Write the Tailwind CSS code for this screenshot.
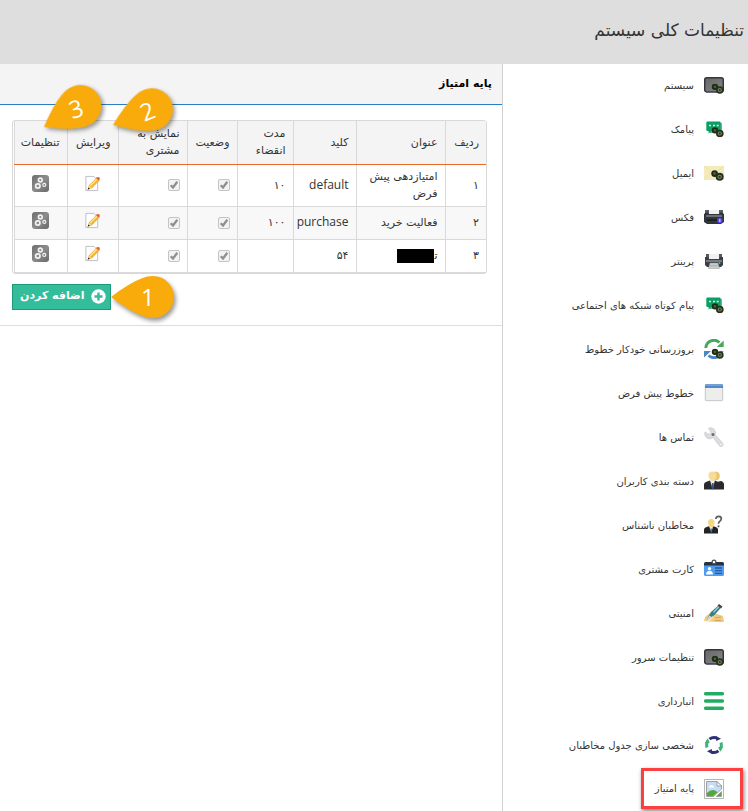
<!DOCTYPE html>
<html lang="fa" dir="rtl">
<head>
<meta charset="utf-8">
<meta name="viewport" content="width=device-width, initial-scale=1">
<title>تنظیمات کلی سیستم</title>
<script src="https://cdn.jsdelivr.net/npm/@tailwindcss/browser@4"></script>
</head>
<body class="flex min-h-screen flex-col bg-white font-['DejaVu_Sans',sans-serif] text-[11px] text-[#333]">

<svg class="absolute size-0" aria-hidden="true">
  <defs>
    <linearGradient id="gGrey" x1="0" y1="0" x2="1" y2="1"><stop offset="0" stop-color="#6d6d6d"/><stop offset=".5" stop-color="#8c8c8c"/><stop offset="1" stop-color="#686868"/></linearGradient>
    <linearGradient id="gScreen" x1="0" y1="0" x2="1" y2="1"><stop offset="0" stop-color="#666"/><stop offset="1" stop-color="#878787"/></linearGradient>
  </defs>
  <symbol id="gears" viewBox="0 0 12 10">
    <circle cx="3.6" cy="3.2" r="2.2" fill="#4d5b40" stroke="#1d2a14" stroke-width="1.7"/>
    <circle cx="8.2" cy="6.2" r="2.8" fill="#7c8768" stroke="#26331c" stroke-width="1.7"/>
    <circle cx="8.2" cy="6.2" r="1" fill="#26331c"/>
  </symbol>
  <symbol id="i-system" viewBox="0 0 20 20">
    <rect x=".7" y="2.7" width="18.6" height="14" rx="2" fill="url(#gScreen)" stroke="#34343e" stroke-width="1.5"/>
    <path d="M2 16.8h14" stroke="#4b4b69" stroke-width="1.6"/>
    <use href="#gears" x="7" y="8.5" width="13" height="10.5"/>
  </symbol>
  <symbol id="i-chat" viewBox="0 0 20 20">
    <path d="M6 4h12v10h-2v3l-4-3H6z" fill="#5fbc92"/>
    <path d="M3.500 2.500h12a1.200 1.200 0 0 1 1.200 1.200v7a1.200 1.200 0 0 1-1.200 1.200H7.500L4.500 14.500v-2.600h-1a1.200 1.200 0 0 1-1.200-1.200v-7a1.200 1.200 0 0 1 1.200-1.200z" fill="#0c9f65"/>
    <path d="M5 6.500h2M9 6.500h2M12.700 6.500h2" stroke="#d8f4e6" stroke-width="1.700"/>
    <use href="#gears" x="7" y="8" width="13" height="10.500"/>
  </symbol>
  <symbol id="i-mail" viewBox="0 0 20 20">
    <path d="M0 3h20v14H0z" fill="#f4ebbd"/><path d="M0 3l10 8 10-8M0 17l7-8" fill="none" stroke="#eadfa7" stroke-width=".8"/>
    <use href="#gears" x="6.500" y="7" width="13.500" height="11"/>
  </symbol>
  <symbol id="i-printer" viewBox="0 0 20 20">
    <path d="M2 3h3v5h10V3h3v5H2z" fill="#56595e"/><path d="M5 3h10v5H5z" fill="#f0f1f2"/>
    <path d="M1 6h3l1 2h10l1-2h3v8l-2 2H3l-2-2z" fill="#3c3e43"/>
    <path d="M2 10h16" stroke="#989da2" stroke-width="1.300"/>
    <path d="M6 12h8l1.500 5.500h-11z" fill="#c9cbcd" stroke="#999" stroke-width=".5"/><path d="M6 14.700h8" stroke="#9b9b9b" stroke-width=".6"/>
    <circle cx="15.500" cy="12" r="1" fill="#2bbbdc"/>
  </symbol>
  <symbol id="i-fax" viewBox="0 0 20 20">
    <path d="M1 3h4v5h10V3h4v5H1z" fill="#5a5d62"/><path d="M5 3h10v4H5z" fill="#eef0f2"/>
    <path d="M0 7l3-2 2 2h10l2-2 3 2v8l-3 2H3l-3-2z" fill="#333539"/>
    <path d="M2 9h16" stroke="#8c9094" stroke-width="1.300"/><path d="M3 13h10" stroke="#191a1c" stroke-width="1.500"/>
    <circle cx="15.700" cy="13.500" r="2.700" fill="#5245e8"/><path d="M15.200 12h1.200v3h-1.200z" fill="#dcd9ff"/>
  </symbol>
  <symbol id="i-update" viewBox="0 0 20 20">
    <path d="M1.800 9A8.200 8.200 0 0 1 15.500 3.500" fill="none" stroke="#48a75d" stroke-width="3"/><path d="M19.700 1.500v6.500h-7z" fill="#48a75d"/>
    <path d="M18 12A8.200 8.200 0 0 1 4.500 16.500" fill="none" stroke="#4a86c4" stroke-width="3"/><path d="M0 18.500v-6.500h7z" fill="#4a86c4"/>
    <use href="#gears" x="7" y="9.500" width="13" height="10.500"/>
  </symbol>
  <symbol id="i-window" viewBox="0 0 20 20">
    <rect x="1.300" y="1.700" width="17.400" height="16" rx="1" fill="#ededeb" stroke="#b9bab8" stroke-width=".8"/>
    <path d="M1 2.200q0-1 1-1h16q1 0 1 1V5H1z" fill="#5289cd"/><path d="M1.500 2.300h17" stroke="#82aee3" stroke-width=".8"/>
  </symbol>
  <symbol id="i-wrench" viewBox="0 0 20 20">
    <path d="M4.500 1.200A5 5 0 0 1 11.200 7.500L18.500 16A2 2 0 0 1 15.500 19L9 10.500A5 5 0 0 1 1 5l4 2.500 2-2.200z" fill="#dcdcde" stroke="#c8c8cb" stroke-width=".7"/>
    <circle cx="9" cy="7.500" r="1.500" fill="#69696d"/><circle cx="17" cy="17.500" r=".8" fill="#fff"/>
  </symbol>
  <symbol id="i-users" viewBox="0 0 20 20">
    <path d="M8 2q4-3 7 0 2 4-1 7H8z" fill="#ecc373"/><path d="M4.500 4q0-3.500 4-3.500t4 4q0 4-4 6-4-2-4-6.500z" fill="#f8dc94"/>
    <path d="M0 18.500v-5q0-2 2.500-2.800L6 9.500l2.500 3 2.500-3 3 1.200 3-.7q3 1 3 3.500v5z" fill="#2a2a2c"/>
    <path d="M6 9.500l2.500 8 2.500-8-2.500 2.500z" fill="#d9e1ef"/><path d="M8 12h1.400l.6 5-1.300 1.500L7.500 17z" fill="#33548c"/>
  </symbol>
  <symbol id="i-unknown" viewBox="0 0 20 20">
    <path d="M4 7.500q0-3.500 3.300-3.500t3.300 3.500q0 3.500-3.300 5-3.300-1.500-3.300-5z" fill="#f6d681"/>
    <path d="M0 18.500v-4q0-1.500 2-2.200l3-1L7.200 14l2.300-2.700 2.700 1q1.800.7 1.800 2.200v4z" fill="#232325"/><path d="M5 11.300l2.200 5.500 2.300-5.500L7.200 14z" fill="#dce4f2"/>
    <path d="M7.200 14v3.500" stroke="#2f64b5" stroke-width="1.200"/>
    <path d="M11.800 4q.3-2.600 3-2.600 2.500 0 2.500 2.400 0 1.500-1.600 2.600-1.200.9-1.200 2.300" fill="none" stroke="#5d5d60" stroke-width="1.700"/><circle cx="14.500" cy="11.300" r="1.100" fill="#5d5d60"/>
  </symbol>
  <symbol id="i-card" viewBox="0 0 20 20">
    <path d="M0 4.500Q0 3 1.500 3h17Q20 3 20 4.500V7H0z" fill="#29333f"/><path d="M0 6.500h20v9q0 1.500-1.500 1.500h-17Q0 17 0 15.500z" fill="#4d9cf2"/>
    <circle cx="10" cy="3" r="1.900" fill="#fff" stroke="#4b4b4b" stroke-width="1.200"/>
    <circle cx="5.500" cy="9.700" r="1.700" fill="#fff"/><path d="M2 15.500q0-3 2-3.500h3q2 .5 2 3.500z" fill="#fff"/>
    <path d="M11 9h7M11 11.700h7M11 14.300h7" stroke="#2a5b98" stroke-width="1.300"/>
  </symbol>
  <symbol id="i-security" viewBox="0 0 20 20">
    <path d="M0 18l1-4 5-4q2-2 4 0l3 1 6 2 1 6h-8z" fill="#f0c982"/><path d="M1 17l5-4 4 1-5 5z" fill="#f8e2ac"/><path d="M11 15l6-1M11 17.500h6" stroke="#d5a556" stroke-width="1"/>
    <path d="M2 17.500L7 9 15.500 1.500l2.500 2L10.500 12z" fill="#35808b"/><path d="M9 9l6.500-7 1 .8-6.500 7z" fill="#a8d0d3"/><path d="M2 17.500l3.500-5 2 1.600z" fill="#d5dde0"/><path d="M15 1l3.500 2.700-1.700 1.700-3.300-2.800z" fill="#4a4a42"/>
  </symbol>
  <symbol id="i-bars" viewBox="0 0 20 20"><path d="M1.700 2.700h16.600M1.700 10h16.600M1.700 17.300h16.600" stroke="#20ac62" stroke-width="3.500" stroke-linecap="round"/></symbol>
  <symbol id="i-cycle" viewBox="0 0 20 20">
    <g fill="none" stroke-width="2.900"><path d="M5.500 4.200a7.400 7.400 0 0 1 7-1.300M14.500 15.800a7.400 7.400 0 0 1-7 1.300" stroke="#2e3173"/><path d="M17 7.500a7.400 7.400 0 0 1-1.200 7M3 12.500a7.400 7.400 0 0 1 1.200-7" stroke="#3fb27a"/></g>
    <path d="M11.500.8l5.500 3-4.700 2.200zM8.500 19.200L3 16.200l4.700-2.200z" fill="#2e3173"/><path d="M19.300 11.500l-3 5.200-2-4.500zM.7 8.500l3-5.200 2 4.500z" fill="#3fb27a"/>
  </symbol>
  <symbol id="i-broken" viewBox="0 0 20 20">
    <path d="M.5.500h19v19H.5z" fill="#fff" stroke="#b5b5b5"/>
    <path d="M2.500 2.500h10.500L17.500 7v3l-8 7.500h-7z" fill="#c8dcf7" stroke="#999" stroke-width=".9"/><path d="M13 2.500V7h4.500z" fill="#fff" stroke="#999" stroke-width=".9"/>
    <path d="M5 7.500q1.500-2.500 3.500-1 2 0 1.500 2H5z" fill="#fff"/><path d="M3 17v-3q4.500-4.500 9-2l1.500 1.200-4.300 3.800z" fill="#53a83b"/>
    <path d="M17.500 12.500v5h-5.300z" fill="#53a83b" stroke="#999" stroke-width=".8"/>
  </symbol>
  <symbol id="i-edit" viewBox="0 0 18 18">
    <path d="M2 1.500h8.500l4 4v11H2z" fill="#fff" stroke="#bbbbc4"/>
    <path d="M5.500 11l8-7.800 2.600 2.300L8.500 13.600 4.700 14.800z" fill="#f8b830" stroke="#d98a1f" stroke-width=".6"/>
    <path d="M6.500 11.500l7-7" stroke="#ffeb91" stroke-width="1.200"/><path d="M12.700 3.300l1-1q1.500-.6 2.400.2t.5 2.100l-1 1.100z" fill="#e9603c"/>
    <path d="M5.200 11.500l2.900 2.300-4 1.400z" fill="#f6dba7"/><path d="M4.700 13.200l1.600 1.300-2.600 1z" fill="#222"/>
  </symbol>
  <symbol id="i-config" viewBox="0 0 17 17">
    <rect width="17" height="17" rx="3" fill="url(#gGrey)"/>
    <g fill="none" stroke="#f2f2f2"><circle cx="8.300" cy="5" r="1.900" stroke-width="1.600"/><circle cx="5.800" cy="11" r="2.200" stroke-width="1.700"/><circle cx="12.300" cy="9.900" r="1.500" stroke-width="1.200"/></g>
  </symbol>
  <symbol id="i-check" viewBox="0 0 12 12"><path d="M2.700 6.200l2.300 2.300 4.300-5.700" fill="none" stroke="#8f8f8f" stroke-width="2.300"/></symbol>
  <symbol id="pin" viewBox="0 0 64 44">
    <path d="M0 22Q18 8 31 3.200Q36 1 42 1A21 21 0 0 1 42 43Q36 43 31 40.800Q18 36 0 22z" fill="#f8ab0b"/>
  </symbol>
</svg>

<header class="flex h-16 items-center bg-[#dedede] px-1 pb-1">
  <h1 class="text-[17px] leading-6">تنظیمات کلی سیستم</h1>
</header>

<div class="flex flex-1">
  <nav class="w-[246px] shrink-0 border-l border-[#d0d0d0]" aria-label="تنظیمات">
    <ul id="menu"></ul>
  </nav>

  <main class="relative min-w-0 flex-1">
    <section class="border-b border-[#ddd] pb-[15px]">
      <h2 class="flex h-[41px] items-center border-b border-[#2b7fc0] bg-[#f4f4f4] px-[10px] text-[11px] font-bold text-black">پایه امتیاز</h2>
      <div class="mt-[15px] mr-[15px] ml-3 rounded-[3px] border border-[#d9d9d9] pl-px">
        <table class="w-full table-fixed border-collapse">
          <colgroup>
            <col class="w-[41px]"><col class="w-[89px]"><col class="w-[63px]"><col class="w-[56px]"><col class="w-[50px]"><col class="w-[69px]"><col class="w-[51px]"><col class="w-[53px]">
          </colgroup>
          <thead>
            <tr class="h-[43px] bg-[#f4f4f4] text-right leading-[17px] *:border-b *:border-l *:border-b-[#e96a24] *:border-l-[#d9d9d9] *:px-[7px] *:font-normal">
              <th scope="col">ردیف</th><th scope="col">عنوان</th><th scope="col">کلید</th><th scope="col">مدت انقضاء</th><th scope="col">وضعیت</th><th scope="col">نمایش به مشتری</th><th scope="col">ویرایش</th><th scope="col">تنظیمات</th>
            </tr>
          </thead>
          <tbody id="rows"></tbody>
        </table>
      </div>
      <button type="button" class="mt-[10px] mr-auto ml-3 flex h-[26px] items-center gap-[6px] border border-[#1f9a78] bg-[#34bd9a] pr-1 pl-[7px] text-[11px] font-bold text-white">
        <svg class="size-[15px]" viewBox="0 0 15 15" aria-hidden="true"><circle cx="7.500" cy="7.500" r="7.200" fill="#fff"/><path d="M7.500 3.500v8M3.500 7.500h8" stroke="#34bd9a" stroke-width="2.400"/></svg>
        <span>اضافه کردن</span>
      </button>
    </section>

    <div class="absolute top-[211px] left-[111px] h-[44px] w-[64px] font-['Open_Sans',sans-serif] text-2xl text-white">
      <svg class="absolute inset-0 size-full drop-shadow-[2px_3px_2px_rgba(0,0,0,0.4)]" aria-hidden="true"><use href="#pin"/></svg>
      <span class="absolute top-[6px] left-[30px]">1</span>
    </div>
    <div class="absolute top-[39px] left-[113px] h-[44px] w-[64px] origin-left rotate-[-22deg] font-['Open_Sans',sans-serif] text-2xl text-white">
      <svg class="absolute inset-0 size-full drop-shadow-[1px_3px_2px_rgba(0,0,0,0.4)]" aria-hidden="true"><use href="#pin"/></svg>
      <span class="absolute top-[6px] left-[30px]">2</span>
    </div>
    <div class="absolute top-[41px] left-[44px] h-[44px] w-[64px] origin-left rotate-[-30deg] font-['Open_Sans',sans-serif] text-2xl text-white">
      <svg class="absolute inset-0 size-full drop-shadow-[1px_3px_2px_rgba(0,0,0,0.4)]" aria-hidden="true"><use href="#pin"/></svg>
      <span class="absolute top-[6px] left-[30px] rotate-12">3</span>
    </div>
  </main>
</div>

<script>
const items = [
  ['system', 'سیستم'], ['chat', 'پیامک'], ['mail', 'ایمیل'], ['fax', 'فکس'], ['printer', 'پرینتر'],
  ['chat', 'پیام کوتاه شبکه های اجتماعی'], ['update', 'بروزرسانی خودکار خطوط'], ['window', 'خطوط پیش فرض'],
  ['wrench', 'تماس ها'], ['users', 'دسته بندی کاربران'], ['unknown', 'مخاطبان ناشناس'], ['card', 'کارت مشتری'],
  ['security', 'امنیتی'], ['system', 'تنظیمات سرور'], ['bars', 'انبارداری'], ['cycle', 'شخصی سازی جدول مخاطبان'], ['broken', 'پایه امتیاز']
];
document.getElementById('menu').innerHTML = items.map(([icon, label], i) => {
  const last = i === items.length - 1;
  return `<li class="relative ${last ? 'h-[43px]' : 'h-11'}"><a href="#" class="flex h-full items-center gap-[10px] pr-6 pb-[2px] text-[10px]"><svg class="size-5 shrink-0" aria-hidden="true"><use href="#i-${icon}"/></svg><span>${label}</span></a>${last ? '<span class="pointer-events-none absolute top-0 right-[5px] h-[41px] w-[102px] border-[3px] border-[#fa4040] shadow-[1px_2px_4px_rgba(0,0,0,0.5)]"></span>' : ''}</li>`;
}).join('');

const rows = [
  ['۱', 'امتیازدهی پیش فرض', '<span class="font-[\'Open_Sans\',sans-serif] text-xs">default</span>', '۱۰'],
  ['۲', 'فعالیت خرید', '<span class="font-[\'Open_Sans\',sans-serif] text-xs">purchase</span>', '۱۰۰'],
  ['۳', '<span class="flex items-center">ت&zwj;<span class="h-[14px] w-[37px] bg-black"></span></span>', '۵۴', '']
];
const box = label => `<span class="relative block size-3"><input type="checkbox" checked disabled aria-label="${label}" class="block size-3 appearance-none rounded-[2px] border border-[#c4c4c4] bg-[#f3f3f3]"><svg class="pointer-events-none absolute inset-0 size-3" aria-hidden="true"><use href="#i-check"/></svg></span>`;
const action = (icon, label) => `<button type="button" aria-label="${label}" class="mx-auto mb-1 block"><svg class="size-[17px]" aria-hidden="true"><use href="#i-${icon}"/></svg></button>`;
document.getElementById('rows').innerHTML = rows.map((r, i) =>
  `<tr class="${i ? 'h-[33px]' : 'h-[42px]'} ${i === 1 ? 'bg-[#f8f8f8]' : 'bg-white'} leading-[17px] *:border-b *:border-l *:border-[#d9d9d9] *:px-[7px]">${r.map(c => `<td>${c}</td>`).join('')}<td>${box('وضعیت')}</td><td>${box('نمایش به مشتری')}</td><td>${action('edit', 'ویرایش')}</td><td>${action('config', 'تنظیمات')}</td></tr>`
).join('');
</script>
</body>
</html>
